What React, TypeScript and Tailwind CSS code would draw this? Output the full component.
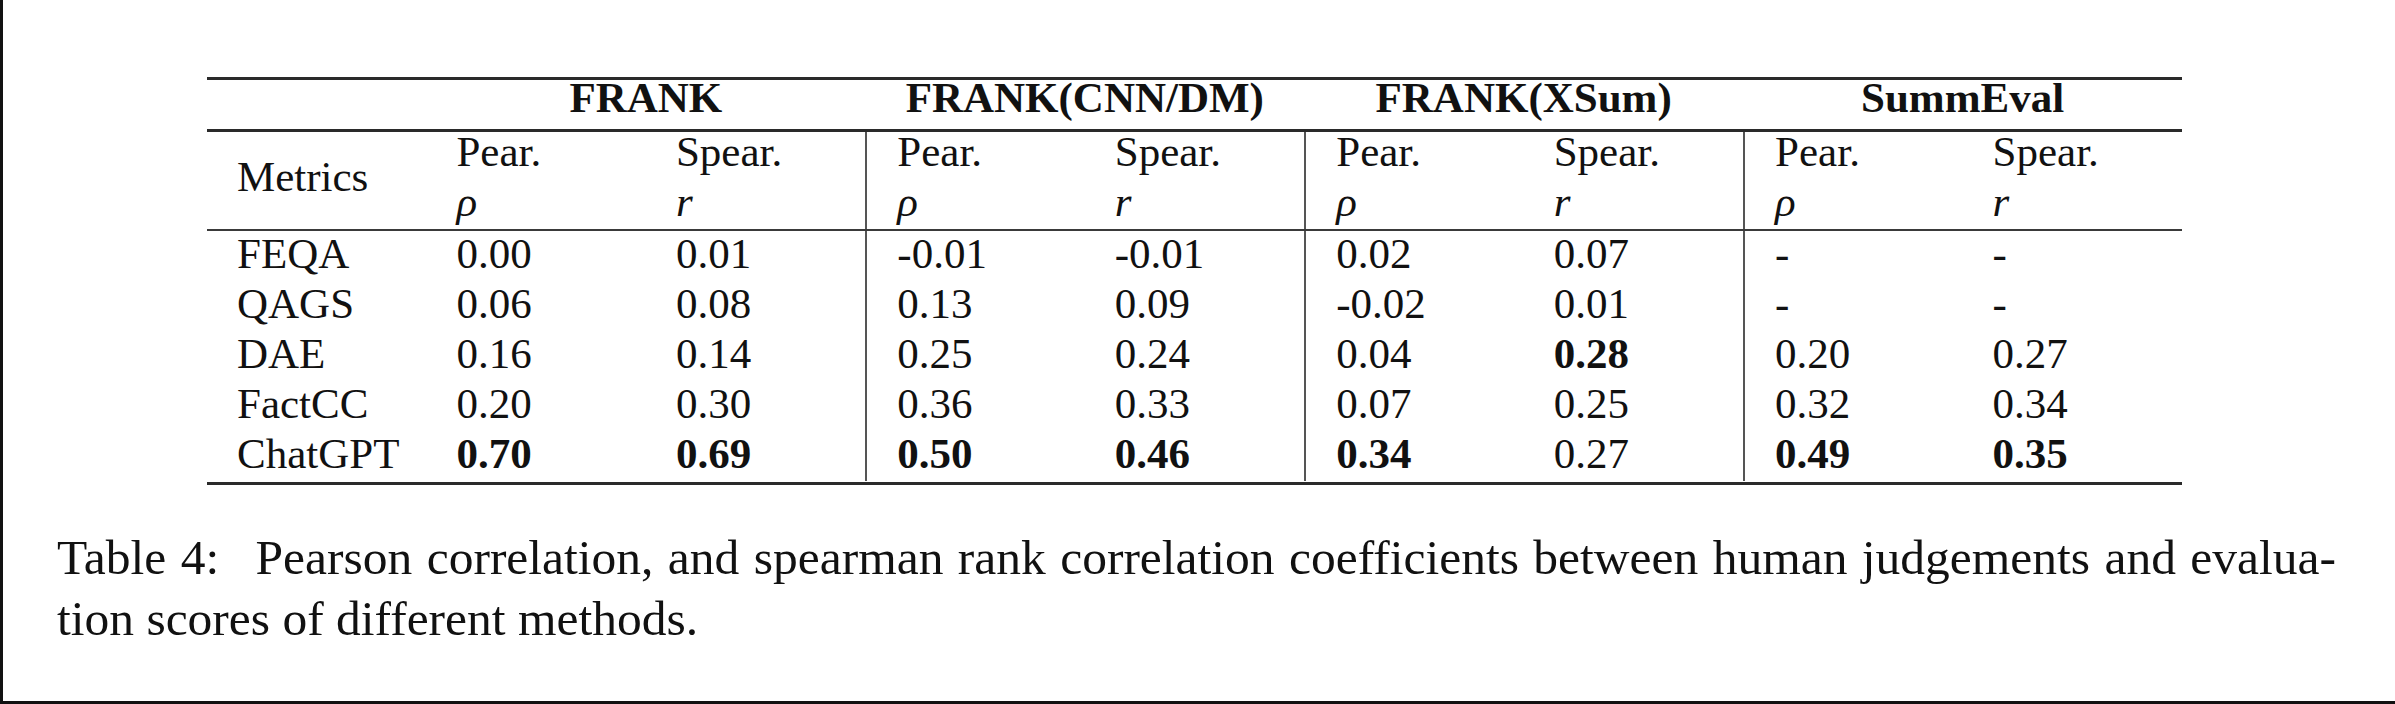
type Row = {
  name: string;
  values: string[];
  bold: number[];
};

const groups = ["FRANK", "FRANK(CNN/DM)", "FRANK(XSum)", "SummEval"];

const rows: Row[] = [
  { name: "FEQA", values: ["0.00", "0.01", "-0.01", "-0.01", "0.02", "0.07", "-", "-"], bold: [] },
  { name: "QAGS", values: ["0.06", "0.08", "0.13", "0.09", "-0.02", "0.01", "-", "-"], bold: [] },
  { name: "DAE", values: ["0.16", "0.14", "0.25", "0.24", "0.04", "0.28", "0.20", "0.27"], bold: [5] },
  { name: "FactCC", values: ["0.20", "0.30", "0.36", "0.33", "0.07", "0.25", "0.32", "0.34"], bold: [] },
  { name: "ChatGPT", values: ["0.70", "0.69", "0.50", "0.46", "0.34", "0.27", "0.49", "0.35"], bold: [0, 1, 2, 3, 4, 6, 7] },
];

// value columns 2, 4 and 6 open a new dataset, so they get the rule on the left
const hasDivider = (i: number) => i === 2 || i === 4 || i === 6;

export default function App() {
  return (
    <div className="h-[704px] w-[2395px] overflow-hidden border-b-[3px] border-l-[3px] border-[#111] bg-white font-['Liberation_Serif','Times_New_Roman',serif] text-[#111]">
      <div className="ml-[204px] w-[1975px] pt-[77px] text-[43px] leading-[36px]">
        <div className="h-[3px] bg-[#2a2a2a]" />

        <div className="grid h-[49px] grid-cols-9 font-bold">
          <div />
          {groups.map((group) => (
            <div className="col-span-2 text-center" key={group}>
              {group}
            </div>
          ))}
        </div>

        <div className="h-[3px] bg-[#2a2a2a]" />

        <div className="grid grid-cols-9 grid-rows-[50px_47px]">
          <div className="row-span-2 pl-[30px] pt-[27px]">Metrics</div>
          {Array.from({ length: 8 }, (_, i) => (
            <div className={`row-span-2 pl-[30px] ${hasDivider(i) ? "border-l-2 border-[#555]" : ""}`} key={i}>
              <div className="h-[50px] pt-[2px]">{i % 2 === 0 ? "Pear." : "Spear."}</div>
              <div className="pt-[2px] italic">{i % 2 === 0 ? "ρ" : "r"}</div>
            </div>
          ))}
        </div>

        <div className="h-[2px] bg-[#3a3a3a]" />

        <div className="grid grid-cols-9">
          {rows.map((row) => [
            <div className="h-[50px] pl-[30px] pt-[5px]" key={`${row.name}-name`}>
              {row.name}
            </div>,
            ...row.values.map((value, i) => (
              <div
                className={`h-[50px] pl-[30px] pt-[5px] ${hasDivider(i) ? "border-l-2 border-[#555]" : ""} ${
                  row.bold.includes(i) ? "font-bold" : ""
                }`}
                key={`${row.name}-${i}`}
              >
                {value}
              </div>
            )),
          ])}
        </div>

        <div className="mt-[1px] h-[3px] bg-[#2a2a2a]" />
      </div>

      <div className="ml-[54px] mt-[42px] w-[2279px] text-[49.5px] leading-[61px]">
        <p className="text-justify [text-align-last:justify]">
          <span className="mr-[22px]">Table 4:</span> Pearson correlation, and spearman rank correlation coefficients between human
          judgements and evalua-
        </p>
        <p>tion scores of different methods.</p>
      </div>
    </div>
  );
}
